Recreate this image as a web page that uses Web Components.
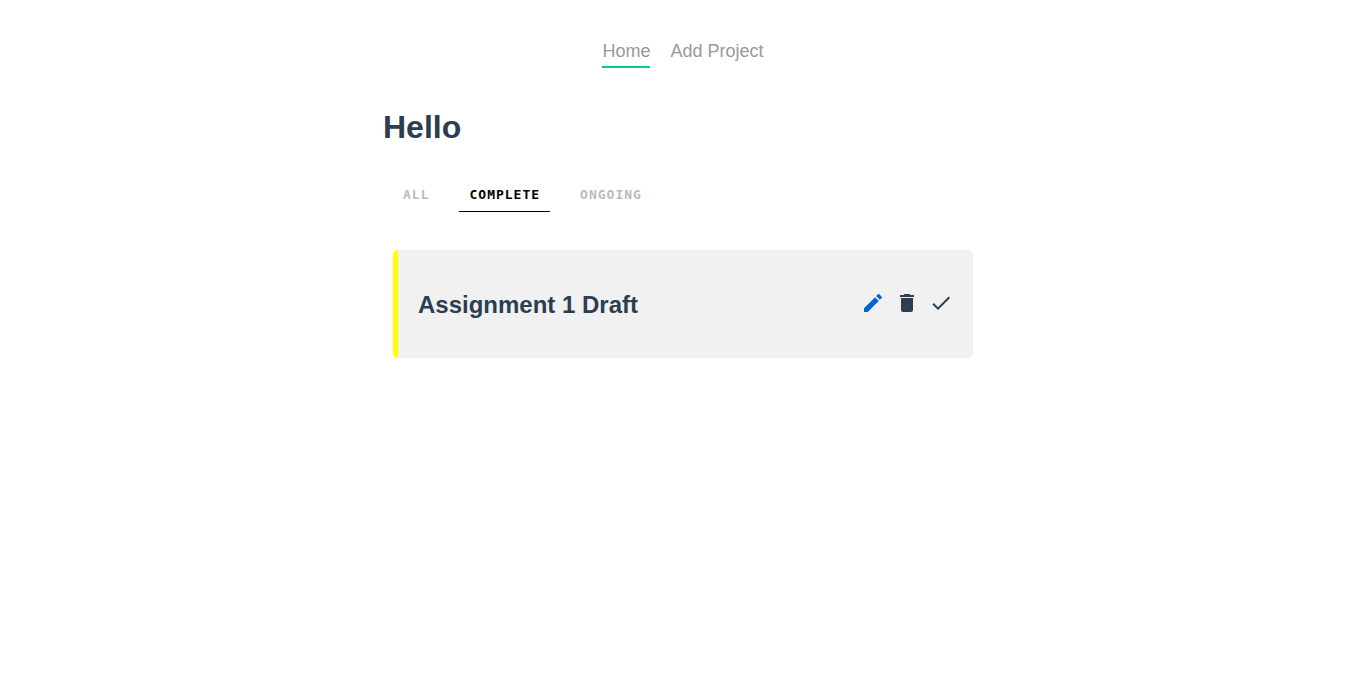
<!DOCTYPE html>
<html lang="en">
<head>
<meta charset="utf-8">
<title>Projects</title>
<style>
body { margin: 0; background: #fff; color: #2c3e50; font-family: "Liberation Sans", Arial, sans-serif; }
</style>
</head>
<body>
<project-app></project-app>
<script>
const define = (name, html, setup) => {
  const template = document.createElement('template');
  template.innerHTML = html;
  customElements.define(name, class extends HTMLElement {
    constructor() {
      super();
      this.attachShadow({ mode: 'open' }).append(template.content.cloneNode(true));
    }
    connectedCallback() { if (setup) setup(this, this.shadowRoot); }
  });
};

define('nav-link', `
<style>
:host { display: block; }
a { display: block; padding-bottom: 4px; border-bottom: 2px solid transparent; color: #999; font-size: 18px; line-height: 22px; text-decoration: none; }
:host([active]) a { border-color: #00ce89; }
</style>
<a href="#"><slot></slot></a>`, (host, root) => {
  root.querySelector('a').href = host.getAttribute('to') || '#';
  if (host.hasAttribute('active')) root.querySelector('a').setAttribute('aria-current', 'page');
});

define('nav-bar', `
<style>
:host { display: block; }
nav { display: flex; justify-content: center; gap: 20px; }
</style>
<nav><slot></slot></nav>`);

define('filter-tab', `
<style>
:host { display: block; }
button { display: block; margin: 0; padding: 0 10px 6px; border: 0; border-bottom: 1px solid transparent; background: none; color: #bbb; font: bold 13px/20px "DejaVu Sans Mono", monospace; letter-spacing: 1px; text-transform: uppercase; cursor: pointer; }
:host([active]) button { color: #000; border-color: #000; }
</style>
<button type="button"><slot></slot></button>`, (host, root) => {
  root.querySelector('button').setAttribute('aria-pressed', host.hasAttribute('active'));
});

define('filter-bar', `
<style>
:host { display: flex; gap: 20px; padding: 0 10px; }
</style>
<slot></slot>`);

define('icon-button', `
<style>
:host { display: block; }
button { display: block; margin: 0; padding: 0; border: 0; background: none; color: inherit; cursor: pointer; }
svg { display: block; width: 24px; height: 24px; fill: currentColor; }
</style>
<button type="button"><svg viewBox="0 0 24 24" aria-hidden="true"><path/></svg></button>`, (host, root) => {
  const shapes = {
    edit: 'M3 17.25V21h3.75L17.81 9.94l-3.75-3.75L3 17.25zM20.71 7.04c.39-.39.39-1.02 0-1.41l-2.34-2.34c-.39-.39-1.02-.39-1.41 0l-1.83 1.83 3.75 3.75 1.83-1.83z',
    delete: 'M6 19c0 1.1.9 2 2 2h8c1.1 0 2-.9 2-2V7H6v12zM19 4h-3.5l-1-1h-5l-1 1H5v2h14V4z',
    done: 'M9 16.2L4.8 12l-1.4 1.4L9 19 21 7l-1.4-1.4L9 16.2z'
  };
  root.querySelector('path').setAttribute('d', shapes[host.getAttribute('icon')]);
  root.querySelector('button').setAttribute('aria-label', host.getAttribute('label'));
});

define('project-card', `
<style>
:host { display: block; }
article { display: flex; align-items: center; justify-content: space-between; gap: 20px; padding: 40px 20px 38px; border-left: 5px solid #ff0; border-radius: 5px; background: #f1f1f1; }
h2 { margin: 0; font-size: 24px; line-height: 30px; }
.actions { display: flex; gap: 10px; padding-bottom: 4px; }
.edit { color: #0366d6; }
</style>
<article>
  <h2><slot></slot></h2>
  <div class="actions">
    <icon-button class="edit" icon="edit" label="Edit project"></icon-button>
    <icon-button icon="delete" label="Delete project"></icon-button>
    <icon-button icon="done" label="Mark complete"></icon-button>
  </div>
</article>`);

define('project-app', `
<style>
:host { display: block; padding: 40px 20px; }
main { max-width: 600px; margin: 40px auto 0; }
h1 { margin: 0 0 39px; font-size: 32px; line-height: 38px; }
project-card { margin: 38px 10px 20px; }
</style>
<nav-bar>
  <nav-link to="#home" active>Home</nav-link>
  <nav-link to="#add">Add Project</nav-link>
</nav-bar>
<main>
  <h1>Hello</h1>
  <filter-bar>
    <filter-tab>All</filter-tab>
    <filter-tab active>Complete</filter-tab>
    <filter-tab>Ongoing</filter-tab>
  </filter-bar>
  <project-card>Assignment 1 Draft</project-card>
</main>`);
</script>
</body>
</html>
